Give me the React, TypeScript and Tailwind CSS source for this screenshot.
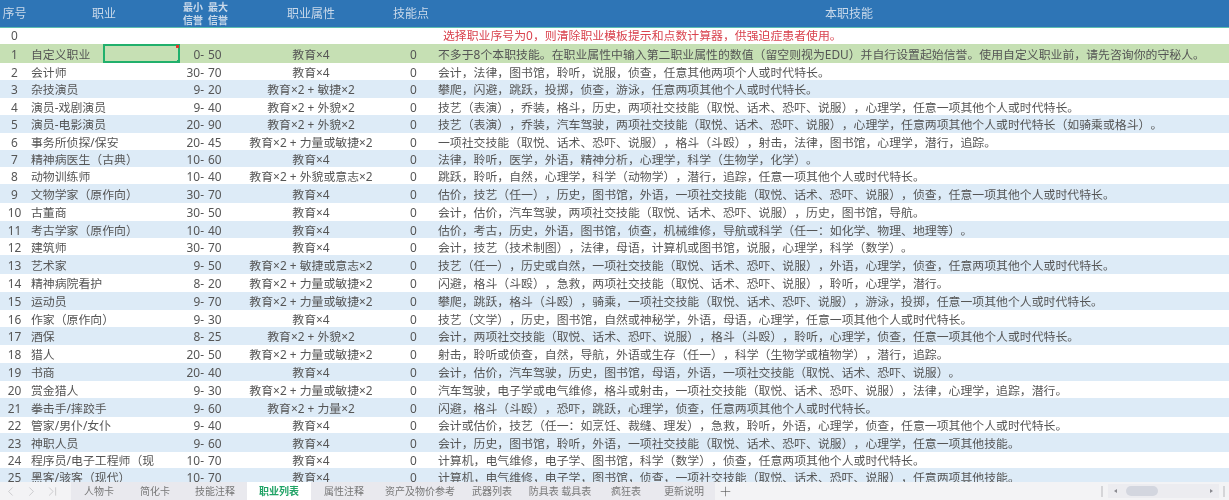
import { ChevronLast, ChevronLeft, ChevronRight, Plus } from 'lucide-react';

const social = '（取悦、话术、恐吓、说服）';

const rows = [
  { id: 1, name: '自定义职业', min: '0', max: '50', attr: '教育×4', h: 'h-[19px]', skills: '不多于8个本职技能。在职业属性中输入第二职业属性的数值（留空则视为EDU）并自行设置起始信誉。使用自定义职业前，请先咨询你的守秘人。' },
  { id: 2, name: '会计师', min: '30', max: '70', attr: '教育×4', h: 'h-[17px]', skills: '会计，法律，图书馆，聆听，说服，侦查，任意其他两项个人或时代特长。' },
  { id: 3, name: '杂技演员', min: '9', max: '20', attr: '教育×2 + 敏捷×2', h: 'h-[18px]', skills: '攀爬，闪避，跳跃，投掷，侦查，游泳，任意两项其他个人或时代特长。' },
  { id: 4, name: '演员-戏剧演员', min: '9', max: '40', attr: '教育×2 + 外貌×2', h: 'h-[17px]', skills: `技艺（表演），乔装，格斗，历史，两项社交技能${social}，心理学，任意一项其他个人或时代特长。` },
  { id: 5, name: '演员-电影演员', min: '20', max: '90', attr: '教育×2 + 外貌×2', h: 'h-[18px]', skills: `技艺（表演），乔装，汽车驾驶，两项社交技能${social}，心理学，任意两项其他个人或时代特长（如骑乘或格斗）。` },
  { id: 6, name: '事务所侦探/保安', min: '20', max: '45', attr: '教育×2 + 力量或敏捷×2', h: 'h-[17px]', skills: `一项社交技能${social}，格斗（斗殴），射击，法律，图书馆，心理学，潜行，追踪。` },
  { id: 7, name: '精神病医生（古典）', min: '10', max: '60', attr: '教育×4', h: 'h-[17px]', skills: '法律，聆听，医学，外语，精神分析，心理学，科学（生物学，化学）。' },
  { id: 8, name: '动物训练师', min: '10', max: '40', attr: '教育×2 + 外貌或意志×2', h: 'h-[17px]', skills: '跳跃，聆听，自然，心理学，科学（动物学），潜行，追踪，任意一项其他个人或时代特长。' },
  { id: 9, name: '文物学家（原作向）', min: '30', max: '70', attr: '教育×4', h: 'h-[19px]', skills: `估价，技艺（任一），历史，图书馆，外语，一项社交技能${social}，侦查，任意一项其他个人或时代特长。` },
  { id: 10, name: '古董商', min: '30', max: '50', attr: '教育×4', h: 'h-[18px]', skills: `会计，估价，汽车驾驶，两项社交技能${social}，历史，图书馆，导航。` },
  { id: 11, name: '考古学家（原作向）', min: '10', max: '40', attr: '教育×4', h: 'h-[17px]', skills: '估价，考古，历史，外语，图书馆，侦查，机械维修，导航或科学（任一：如化学、物理、地理等）。' },
  { id: 12, name: '建筑师', min: '30', max: '70', attr: '教育×4', h: 'h-[17px]', skills: '会计，技艺（技术制图），法律，母语，计算机或图书馆，说服，心理学，科学（数学）。' },
  { id: 13, name: '艺术家', min: '9', max: '50', attr: '教育×2 + 敏捷或意志×2', h: 'h-[19px]', skills: `技艺（任一），历史或自然，一项社交技能${social}，外语，心理学，侦查，任意两项其他个人或时代特长。` },
  { id: 14, name: '精神病院看护', min: '8', max: '20', attr: '教育×2 + 力量或敏捷×2', h: 'h-[18px]', skills: `闪避，格斗（斗殴），急救，两项社交技能${social}，聆听，心理学，潜行。` },
  { id: 15, name: '运动员', min: '9', max: '70', attr: '教育×2 + 力量或敏捷×2', h: 'h-[18px]', skills: `攀爬，跳跃，格斗（斗殴），骑乘，一项社交技能${social}，游泳，投掷，任意一项其他个人或时代特长。` },
  { id: 16, name: '作家（原作向）', min: '9', max: '30', attr: '教育×4', h: 'h-[17px]', skills: '技艺（文学），历史，图书馆，自然或神秘学，外语，母语，心理学，任意一项其他个人或时代特长。' },
  { id: 17, name: '酒保', min: '8', max: '25', attr: '教育×2 + 外貌×2', h: 'h-[18px]', skills: `会计，两项社交技能${social}，格斗（斗殴），聆听，心理学，侦查，任意一项其他个人或时代特长。` },
  { id: 18, name: '猎人', min: '20', max: '50', attr: '教育×2 + 力量或敏捷×2', h: 'h-[18px]', skills: '射击，聆听或侦查，自然，导航，外语或生存（任一），科学（生物学或植物学），潜行，追踪。' },
  { id: 19, name: '书商', min: '20', max: '40', attr: '教育×4', h: 'h-[18px]', skills: `会计，估价，汽车驾驶，历史，图书馆，母语，外语，一项社交技能${social}。` },
  { id: 20, name: '赏金猎人', min: '9', max: '30', attr: '教育×2 + 力量或敏捷×2', h: 'h-[17px]', skills: `汽车驾驶，电子学或电气维修，格斗或射击，一项社交技能${social}，法律，心理学，追踪，潜行。` },
  { id: 21, name: '拳击手/摔跤手', min: '9', max: '60', attr: '教育×2 + 力量×2', h: 'h-[19px]', skills: '闪避，格斗（斗殴），恐吓，跳跃，心理学，侦查，任意两项其他个人或时代特长。' },
  { id: 22, name: '管家/男仆/女仆', min: '9', max: '40', attr: '教育×4', h: 'h-[16px]', skills: '会计或估价，技艺（任一：如烹饪、裁缝、理发），急救，聆听，外语，心理学，侦查，任意一项其他个人或时代特长。' },
  { id: 23, name: '神职人员', min: '9', max: '60', attr: '教育×4', h: 'h-[19px]', skills: `会计，历史，图书馆，聆听，外语，一项社交技能${social}，心理学，任意一项其他技能。` },
  { id: 24, name: '程序员/电子工程师（现', min: '10', max: '70', attr: '教育×4', h: 'h-[16px]', skills: '计算机，电气维修，电子学、图书馆，科学（数学），侦查，任意两项其他个人或时代特长。' },
  { id: 25, name: '黑客/骇客（现代）', min: '10', max: '70', attr: '教育×4', h: 'h-[18px]', skills: `计算机，电气维修，电子学，图书馆，侦查，一项社交技能${social}，任意两项其他技能。` },
];

const tabs = [
  { label: '人物卡', w: 'w-[56px]' },
  { label: '简化卡', w: 'w-[56px]' },
  { label: '技能注释', w: 'w-[64px]' },
  { label: '职业列表', w: 'w-[64px]', active: true },
  { label: '属性注释', w: 'w-[66px]' },
  { label: '资产及物价参考', w: 'w-[86px]' },
  { label: '武器列表', w: 'w-[58px]' },
  { label: '防具表 载具表', w: 'w-[78px]' },
  { label: '疯狂表', w: 'w-[54px]' },
  { label: '更新说明', w: 'w-[62px]' },
];

function rowBg(id: number) {
  if (id === 1) return 'bg-[#c6e0b4]';
  return id % 2 === 1 ? 'bg-[#ddebf7]' : 'bg-white';
}

export default function App() {
  return (
    <div lang="zh-CN" className="flex h-[500px] w-[1229px] flex-col overflow-hidden bg-white font-['Noto_Sans','Noto_Sans_CJK_SC',sans-serif] text-[11.88px] text-[#555] [text-spacing-trim:space-all] blur-[0.35px]">
      <div className="flex h-[27px] shrink-0 items-center bg-[#2e75b6] pt-[1px] text-[12px] text-[#c9d9ea]">
        <div className="w-[29px] text-center">序号</div>
        <div className="w-[150px] text-center">职业</div>
        <div className="flex w-[52px] flex-col pl-[4px] text-[10px] leading-[13px] font-bold">
          <div className="flex gap-[5px]"><span>最小</span><span>最大</span></div>
          <div className="flex gap-[5px]"><span>信誉</span><span>信誉</span></div>
        </div>
        <div className="w-[160px] text-center">职业属性</div>
        <div className="w-[40px] text-center">技能点</div>
        <div className="w-[798px] pl-[394px]">本职技能</div>
      </div>
      <div className="h-px shrink-0 bg-[#5fbfb0]" />

      <div className="min-h-0 flex-1 overflow-hidden">
        <div className="flex h-[16px] items-center">
          <div className="w-[29px] text-center">0</div>
          <div className="pl-[414px] text-[#d9434e]">选择职业序号为0，则清除职业模板提示和点数计算器，供强迫症患者使用。</div>
        </div>
        {rows.map((row) => (
          <div key={row.id} className={`flex items-center whitespace-nowrap pt-[2px] ${row.h} ${rowBg(row.id)}`}>
            <div className="w-[29px] shrink-0 text-center">{row.id}</div>
            <div className="relative flex h-full w-[151px] shrink-0 items-center pl-[2px]">
              {row.name}
              {row.id === 1 && (
                <div className="absolute -top-[2px] right-0 h-[19px] w-[77px] border-2 border-[#21b06c]">
                  <div className="absolute -top-[1px] -right-[1px] h-[3px] w-[3px] bg-[#e0342c]" />
                  <div className="absolute -right-[2px] -bottom-[2px] h-[3px] w-[3px] bg-[#21b06c]" />
                </div>
              )}
            </div>
            <div className="w-[24px] shrink-0 text-right">{row.min}-</div>
            <div className="w-[27px] shrink-0 pl-[4px]">{row.max}</div>
            <div className="w-[160px] shrink-0 text-center">{row.attr}</div>
            <div className="w-[41px] shrink-0 pl-[19px]">0</div>
            <div className="pl-[6px]">{row.skills}</div>
          </div>
        ))}
      </div>

      <div className="flex h-[18px] shrink-0 items-center bg-[#f3f3f5] text-[10px] text-[#777]">
        <div className="flex h-full w-[71px] items-center gap-[6px] pl-[3px] text-[#b5b5b8]">
          <ChevronLeft size={15} strokeWidth={1} />
          <ChevronRight size={15} strokeWidth={1} />
          <ChevronLast size={15} strokeWidth={1} />
        </div>
        <div className="flex h-full items-center bg-[#e9e9ee]">
          {tabs.map((tab) => (
            <div
              key={tab.label}
              className={`flex h-full items-center justify-center ${tab.w} ${tab.active ? 'bg-white font-bold text-[#21a366]' : ''}`}
            >
              {tab.label}
            </div>
          ))}
        </div>
        <Plus size={15} strokeWidth={1} className="ml-[3px] text-[#555]" />
        <div className="ml-auto flex h-full items-center">
          <div className="mr-[5px] h-[11px] w-[2px] border-x border-[#d5d5d8]" />
          <div className="flex h-[14px] w-[111px] items-center bg-[#ececf0]">
            <span className="ml-[6px] border-y-[2.5px] border-r-[3px] border-y-transparent border-r-[#8a8a90]" />
            <div className="ml-[9px] h-[10px] w-[32px] rounded-full bg-[#d3d6df]" />
            <span className="ml-auto mr-[6px] border-y-[2.5px] border-l-[3px] border-y-transparent border-l-[#8a8a90]" />
          </div>
          <div className="mr-[4px] ml-[4px] h-[11px] w-[2px] border-x border-[#d5d5d8]" />
        </div>
      </div>
    </div>
  );
}
